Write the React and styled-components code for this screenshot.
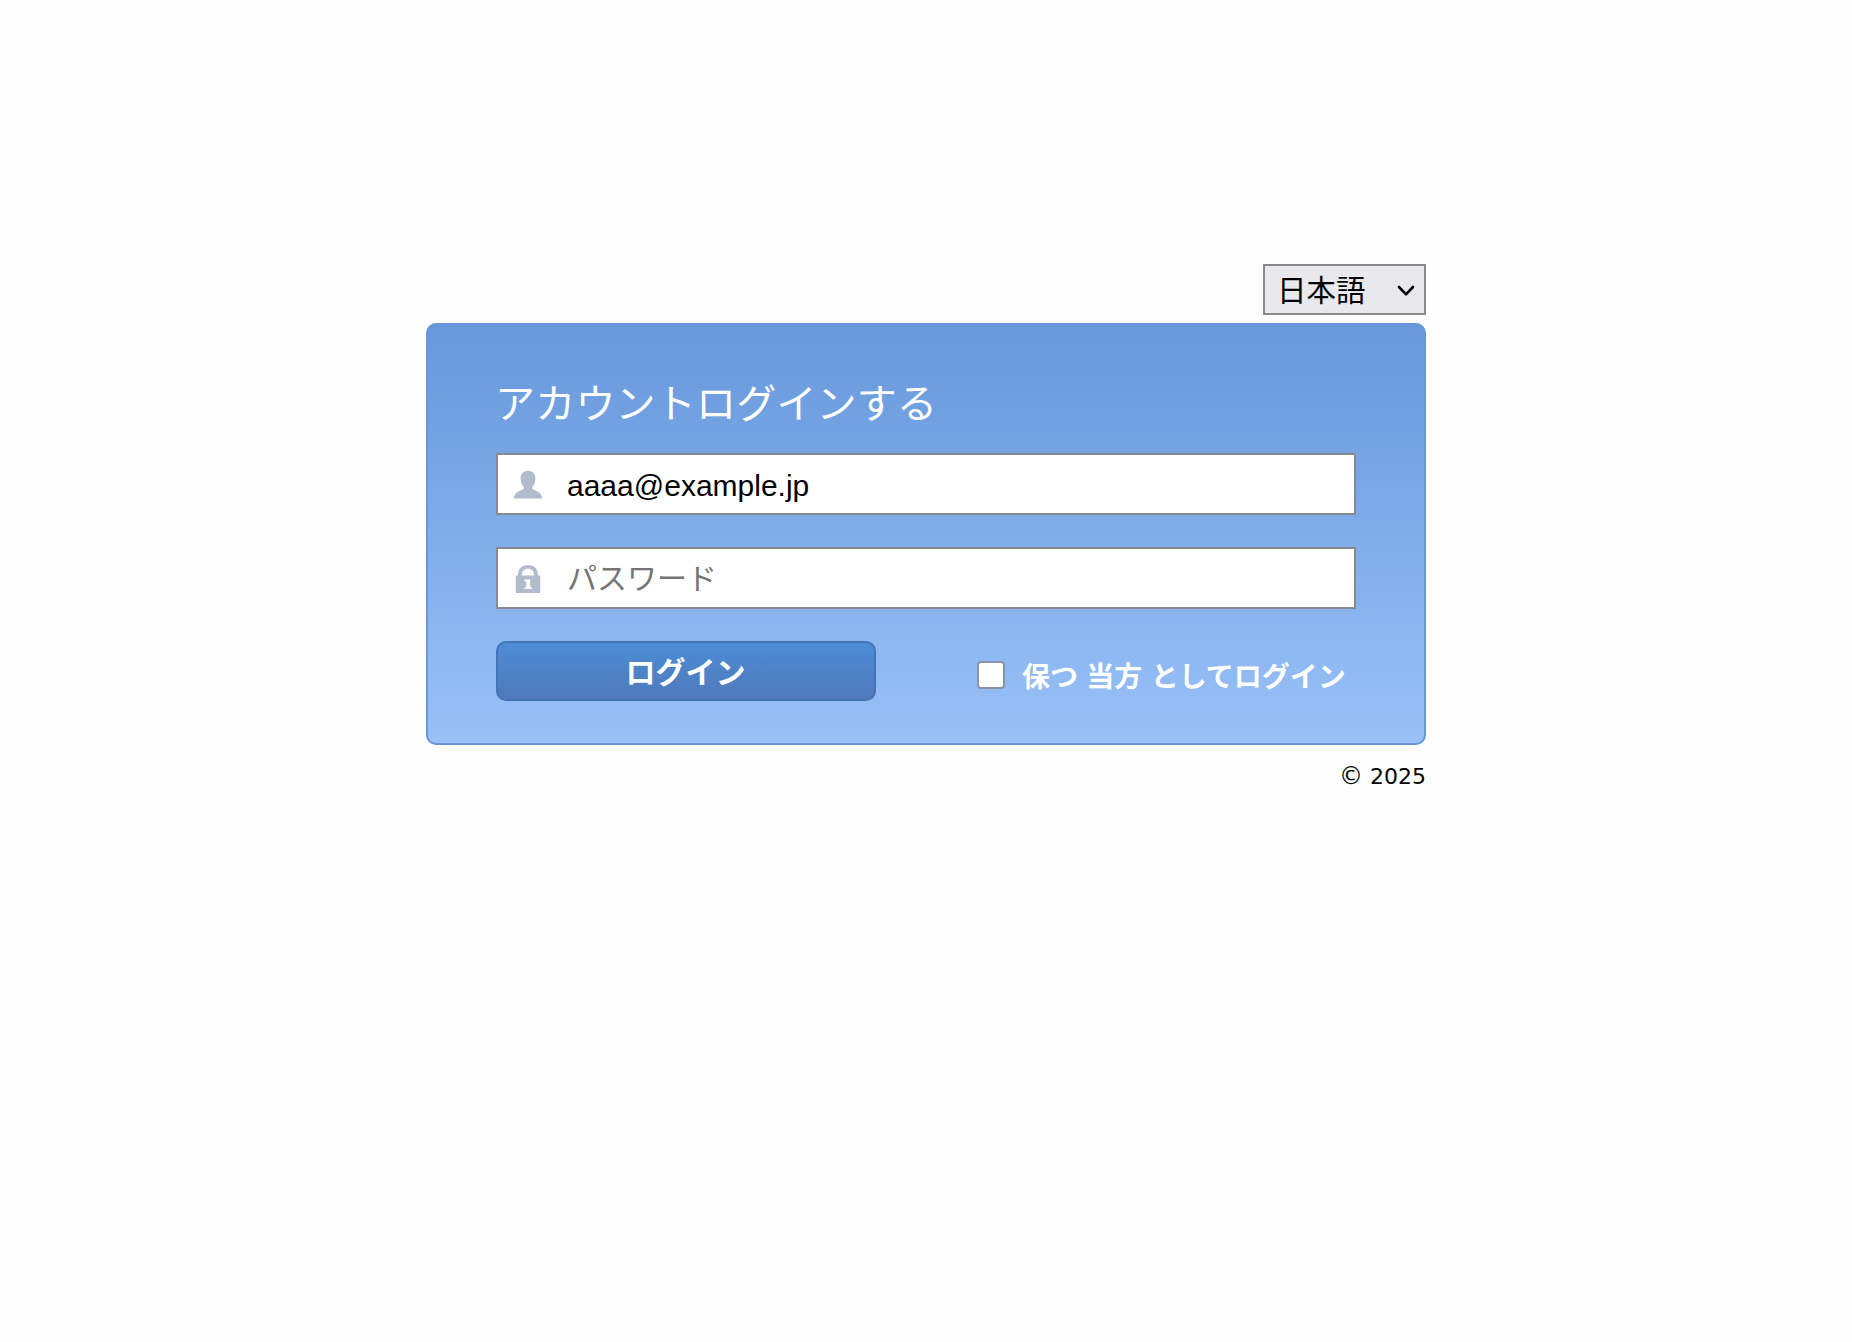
import { useState } from "react";
import styled, { createGlobalStyle } from "styled-components";

export default function App() {
  const [email, setEmail] = useState("aaaa@example.jp");
  const [password, setPassword] = useState("");

  return (
    <>
      <GlobalStyle />
      <Page>
        <LanguageSelect type="button">
          日本語
          <Chevron viewBox="0 0 18 12">
            <path d="M2 2 L9 9.3 L16 2" />
          </Chevron>
        </LanguageSelect>
        <LoginCard onSubmit={(event) => event.preventDefault()}>
          <Title>アカウントログインする</Title>
          <Field>
            <UserIcon />
            <EmailInput
              type="text"
              value={email}
              onChange={(event) => setEmail(event.target.value)}
            />
          </Field>
          <Field>
            <LockIcon />
            <Input
              type="password"
              placeholder="パスワード"
              value={password}
              onChange={(event) => setPassword(event.target.value)}
            />
          </Field>
          <Actions>
            <LoginButton type="submit">ログイン</LoginButton>
            <Remember>
              <Checkbox type="checkbox" />
              <span>保つ 当方 としてログイン</span>
            </Remember>
          </Actions>
        </LoginCard>
        <Copyright>
          <CopyrightSign>©</CopyrightSign> 2025
        </Copyright>
      </Page>
    </>
  );
}

function UserIcon() {
  return (
    <FieldIcon viewBox="0 0 30 30">
      <path d="M15 0.800c4.600 0 7.400 3 7.400 7.600 0 3.500-1 6.700-3.200 8.300v2.100c1.200 1.700 9.400 2.300 10 9.800H.8c.6-7.500 8.800-8.100 10-9.800v-2.100C8.600 15.100 7.600 11.900 7.600 8.400c0-4.600 2.800-7.600 7.400-7.600z" />
    </FieldIcon>
  );
}

function LockIcon() {
  return (
    <FieldIcon viewBox="0 0 30 30">
      <path
        fillRule="evenodd"
        d="M2.800 11.500H5C5 5 8.800 1 15 1s10 4 10 10.500h2.200V29H2.800zM8.800 11.500h12.400C21.200 7 19 4.700 15 4.700s-6.200 2.300-6.200 6.800zM11.500 15.500v1.900h1.700v5.800h-1.700V25h7.300v-1.800h-1.600v-7.700z"
      />
    </FieldIcon>
  );
}

const GlobalStyle = createGlobalStyle`
  * {
    box-sizing: border-box;
  }

  body {
    margin: 0;
    background-color: #fefefe;
    font-family: "Liberation Sans", "Noto Sans CJK JP", sans-serif;
  }
`;

const Page = styled.main`
  display: flex;
  flex-direction: column;
  width: 1000px;
  margin: 0 auto;
  padding-top: 264px;
`;

const LanguageSelect = styled.button`
  display: flex;
  align-items: center;
  justify-content: space-between;
  align-self: flex-end;
  width: 163px;
  height: 51px;
  margin-bottom: 8px;
  padding: 0 9px 1px 12px;
  border: 2px solid #8a8a8a;
  background-color: #e9e9ed;
  color: #000;
  font-family: "Noto Sans CJK JP", sans-serif;
  font-size: 29.5px;
  font-weight: 400;
  line-height: 1;
`;

const Chevron = styled.svg`
  width: 18px;
  height: 12px;
  margin-top: 4px;
  fill: none;
  stroke: #000;
  stroke-width: 2.6;
  stroke-linecap: round;
  stroke-linejoin: round;
`;

const LoginCard = styled.form`
  height: 422px;
  padding: 48px 68px 0;
  border: 2px solid #6897d8;
  border-radius: 10px;
  background: linear-gradient(#6798db, #99c1f8);
`;

const Title = styled.h1`
  height: 80px;
  margin: 0 0 0 -1px;
  color: #fff;
  font-family: "Noto Sans CJK JP", sans-serif;
  font-size: 40px;
  font-weight: 400;
  letter-spacing: 0.2px;
  line-height: 57px;
  white-space: nowrap;
`;

const Field = styled.label`
  display: flex;
  align-items: center;
  height: 62px;
  margin-bottom: 32px;
  padding-left: 15px;
  border: 2px solid #858a91;
  background-color: #fff;
`;

const FieldIcon = styled.svg`
  flex: none;
  width: 30px;
  height: 30px;
  margin: 2px 24px 0 0;
  fill: #b0bccb;
`;

const Input = styled.input`
  flex: 1;
  height: 58px;
  padding: 1px 0 0;
  border: none;
  outline: none;
  background: transparent;
  color: #000;
  font-family: "Liberation Sans", "Noto Sans CJK JP", sans-serif;
  font-size: 30px;

  &::placeholder {
    color: #757575;
    opacity: 1;
  }
`;

const EmailInput = styled(Input)`
  padding-top: 3px;
`;

const Actions = styled.div`
  display: flex;
  align-items: flex-start;
`;

const LoginButton = styled.button`
  width: 380px;
  height: 60px;
  padding: 0 1px 2px 0;
  border: 2px solid #4474b5;
  border-radius: 10px;
  background: linear-gradient(#4c8dd6, #5079bb);
  color: #fff;
  font-family: "Noto Sans CJK JP", sans-serif;
  font-size: 30px;
  font-weight: 700;
  line-height: 1;
`;

const Remember = styled.label`
  display: flex;
  align-items: center;
  height: 28px;
  margin: 20px 0 0 101px;
  color: #fff;
  font-family: "Noto Sans CJK JP", sans-serif;
  font-size: 28px;
  font-weight: 700;
  line-height: 28px;
  white-space: nowrap;
  word-spacing: 2px;
`;

const Checkbox = styled.input`
  appearance: none;
  width: 28px;
  height: 28px;
  margin: 0 17px 0 0;
  border: 2px solid #8c91a5;
  border-radius: 4px;
  background-color: #fff;
`;

const Copyright = styled.footer`
  margin-top: 19px;
  color: #000;
  font-family: "DejaVu Sans", sans-serif;
  font-size: 22px;
  line-height: 26px;
  text-align: right;
`;

const CopyrightSign = styled.span`
  font-size: 24px;
  line-height: 1;
`;
